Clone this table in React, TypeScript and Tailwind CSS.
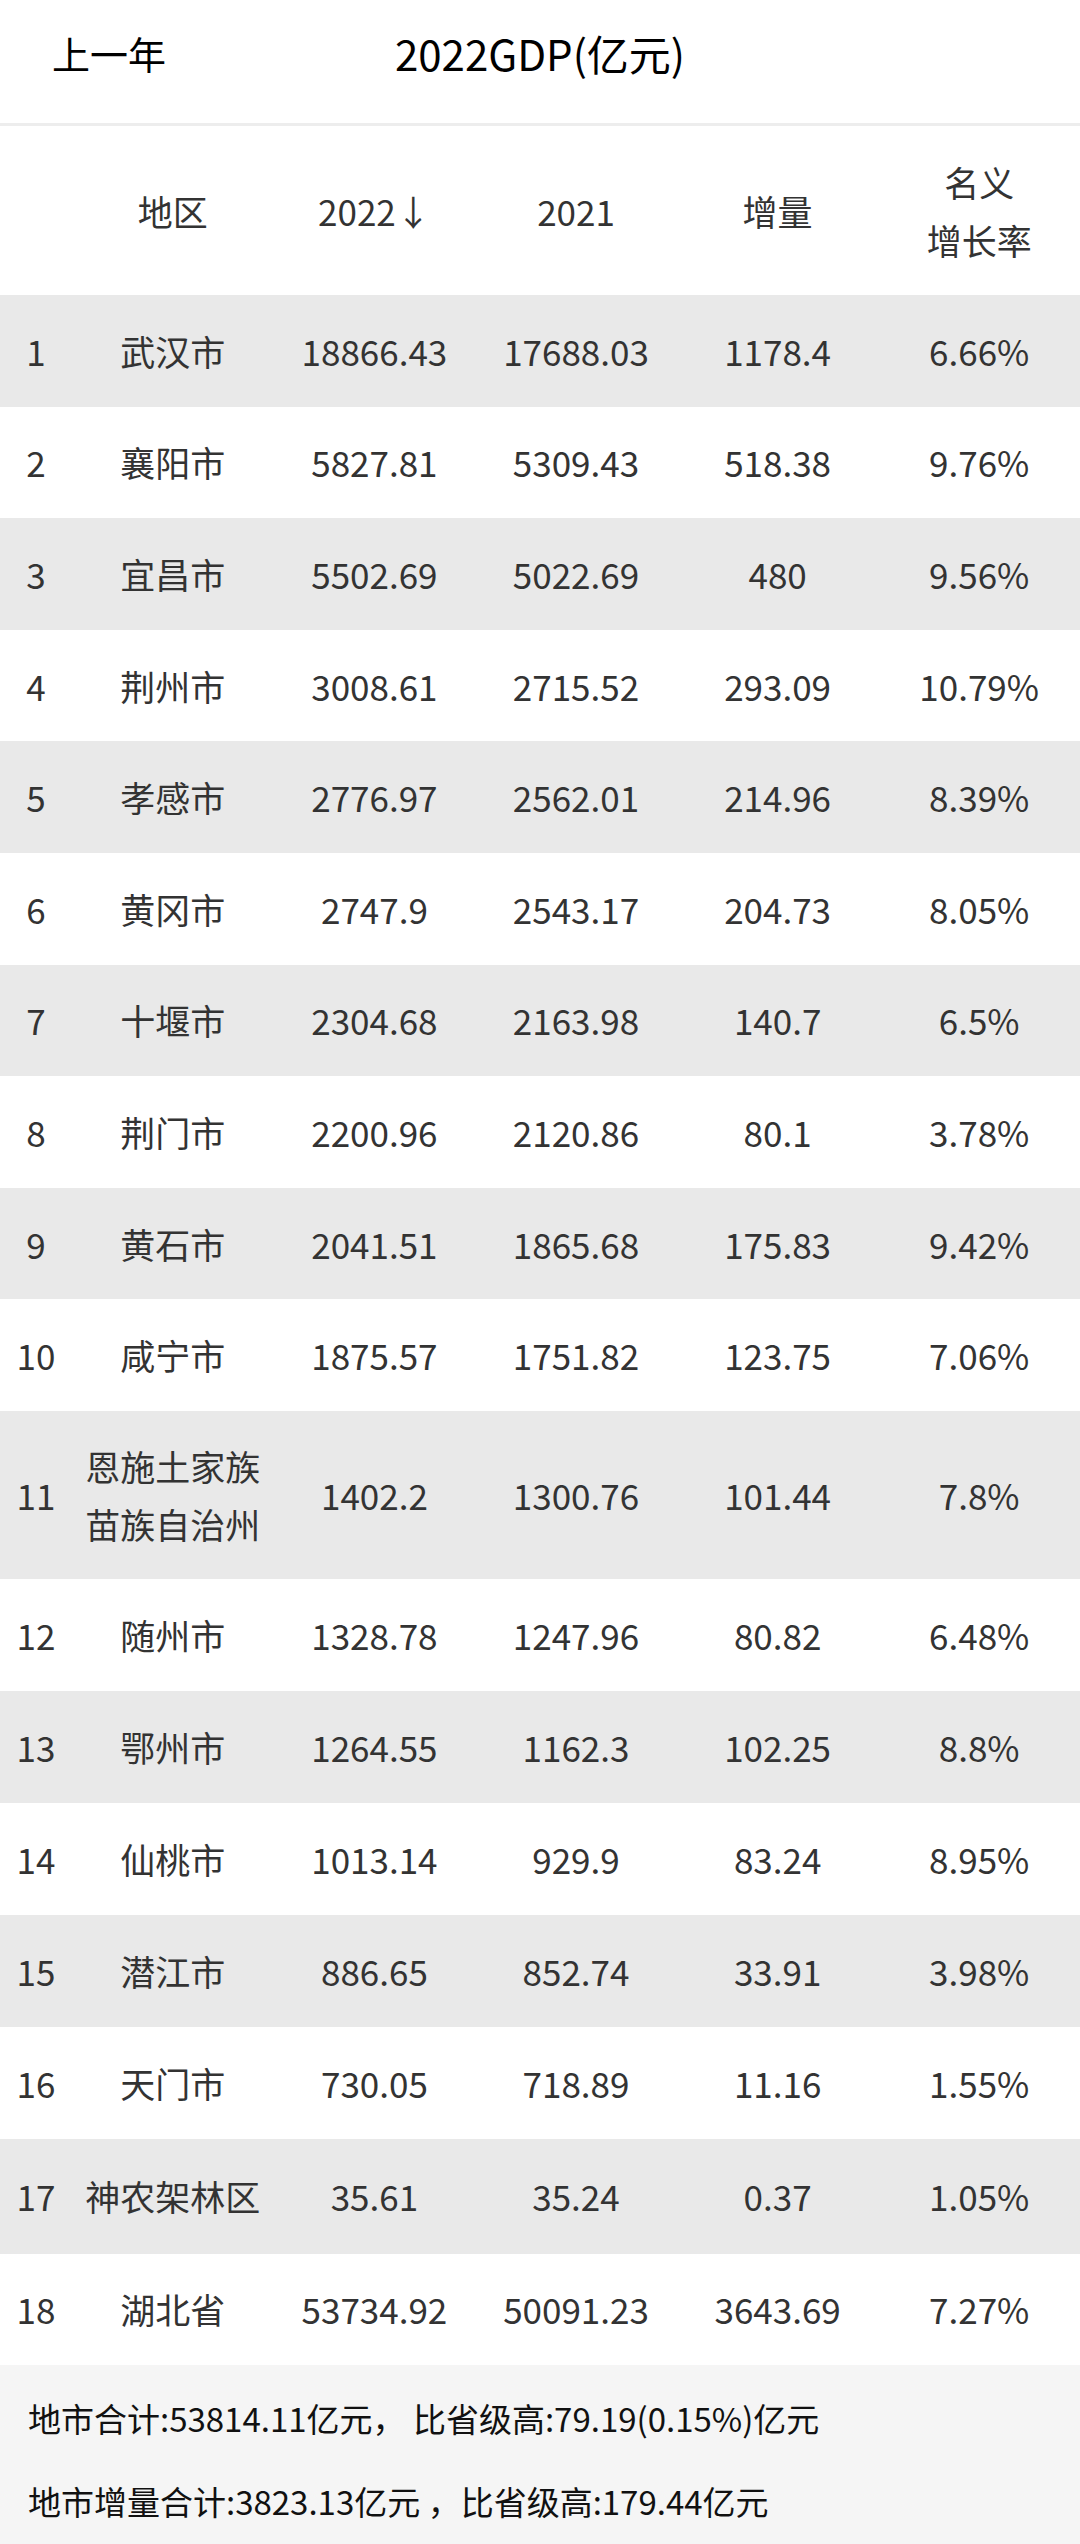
import React from "react";

type Row = { r: string; name: string[]; a: string; b: string; c: string; d: string; h: string };

const rows: Row[] = [
  { r: "1", name: ["武汉市"], a: "18866.43", b: "17688.03", c: "1178.4", d: "6.66%", h: "h-[111.6px]" },
  { r: "2", name: ["襄阳市"], a: "5827.81", b: "5309.43", c: "518.38", d: "9.76%", h: "h-[111.6px]" },
  { r: "3", name: ["宜昌市"], a: "5502.69", b: "5022.69", c: "480", d: "9.56%", h: "h-[111.6px]" },
  { r: "4", name: ["荆州市"], a: "3008.61", b: "2715.52", c: "293.09", d: "10.79%", h: "h-[111.6px]" },
  { r: "5", name: ["孝感市"], a: "2776.97", b: "2562.01", c: "214.96", d: "8.39%", h: "h-[111.6px]" },
  { r: "6", name: ["黄冈市"], a: "2747.9", b: "2543.17", c: "204.73", d: "8.05%", h: "h-[111.6px]" },
  { r: "7", name: ["十堰市"], a: "2304.68", b: "2163.98", c: "140.7", d: "6.5%", h: "h-[111.6px]" },
  { r: "8", name: ["荆门市"], a: "2200.96", b: "2120.86", c: "80.1", d: "3.78%", h: "h-[111.6px]" },
  { r: "9", name: ["黄石市"], a: "2041.51", b: "1865.68", c: "175.83", d: "9.42%", h: "h-[111.6px]" },
  { r: "10", name: ["咸宁市"], a: "1875.57", b: "1751.82", c: "123.75", d: "7.06%", h: "h-[111.6px]" },
  { r: "11", name: ["恩施土家族", "苗族自治州"], a: "1402.2", b: "1300.76", c: "101.44", d: "7.8%", h: "h-[168px]" },
  { r: "12", name: ["随州市"], a: "1328.78", b: "1247.96", c: "80.82", d: "6.48%", h: "h-[112px]" },
  { r: "13", name: ["鄂州市"], a: "1264.55", b: "1162.3", c: "102.25", d: "8.8%", h: "h-[112px]" },
  { r: "14", name: ["仙桃市"], a: "1013.14", b: "929.9", c: "83.24", d: "8.95%", h: "h-[112px]" },
  { r: "15", name: ["潜江市"], a: "886.65", b: "852.74", c: "33.91", d: "3.98%", h: "h-[112px]" },
  { r: "16", name: ["天门市"], a: "730.05", b: "718.89", c: "11.16", d: "1.55%", h: "h-[112px]" },
  { r: "17", name: ["神农架林区"], a: "35.61", b: "35.24", c: "0.37", d: "1.05%", h: "h-[115px]" },
  { r: "18", name: ["湖北省"], a: "53734.92", b: "50091.23", c: "3643.69", d: "7.27%", h: "h-[111px]" },
];

const font = { fontFamily: '"Noto Sans CJK SC", "Noto Sans", sans-serif' };

export default function App() {
  return (
    <div className="w-[1080px] bg-white" style={font}>
      {/* top bar */}
      <div className="h-[123px]">
        <div className="grid h-[104px] grid-cols-[1fr_auto_1fr] items-center text-[42px] text-black">
          <div className="pl-[52px] text-[38px]">上一年</div>
          <div>2022GDP(亿元)</div>
          <div />
        </div>
      </div>
      <div className="h-[3px] bg-[#ededed]" />

      {/* header */}
      <div className="grid h-[169px] grid-cols-[72px_repeat(5,1fr)] items-center text-center text-[35px] leading-[58px] text-[#333]">
        <div />
        <div>地区</div>
        <div>2022↓</div>
        <div>2021</div>
        <div>增量</div>
        <div className="flex flex-col items-center">
          <span>名义</span>
          <span>增长率</span>
        </div>
      </div>

      {/* rows */}
      {rows.map((row, i) => (
        <div
          key={row.r}
          className={`grid ${row.h} grid-cols-[72px_repeat(5,1fr)] items-center text-center text-[35px] leading-[58px] text-[#333] ${
            i % 2 === 0 ? "bg-[#e9e9e9]" : "bg-white"
          }`}
        >
          <div>{row.r}</div>
          <div className="flex flex-col items-center whitespace-nowrap">
            {row.name.map((n) => (
              <span key={n}>{n}</span>
            ))}
          </div>
          <div>{row.a}</div>
          <div>{row.b}</div>
          <div>{row.c}</div>
          <div>{row.d}</div>
        </div>
      ))}

      {/* footer */}
      <div className="h-[179px] bg-[#f5f5f5] pl-[28px] pt-[12px] text-[33px] leading-[83px] text-[#111]">
        <div className="whitespace-nowrap">地市合计:53814.11亿元， 比省级高:79.19(0.15%)亿元</div>
        <div className="whitespace-nowrap">地市增量合计:3823.13亿元 ，比省级高:179.44亿元</div>
      </div>
    </div>
  );
}
